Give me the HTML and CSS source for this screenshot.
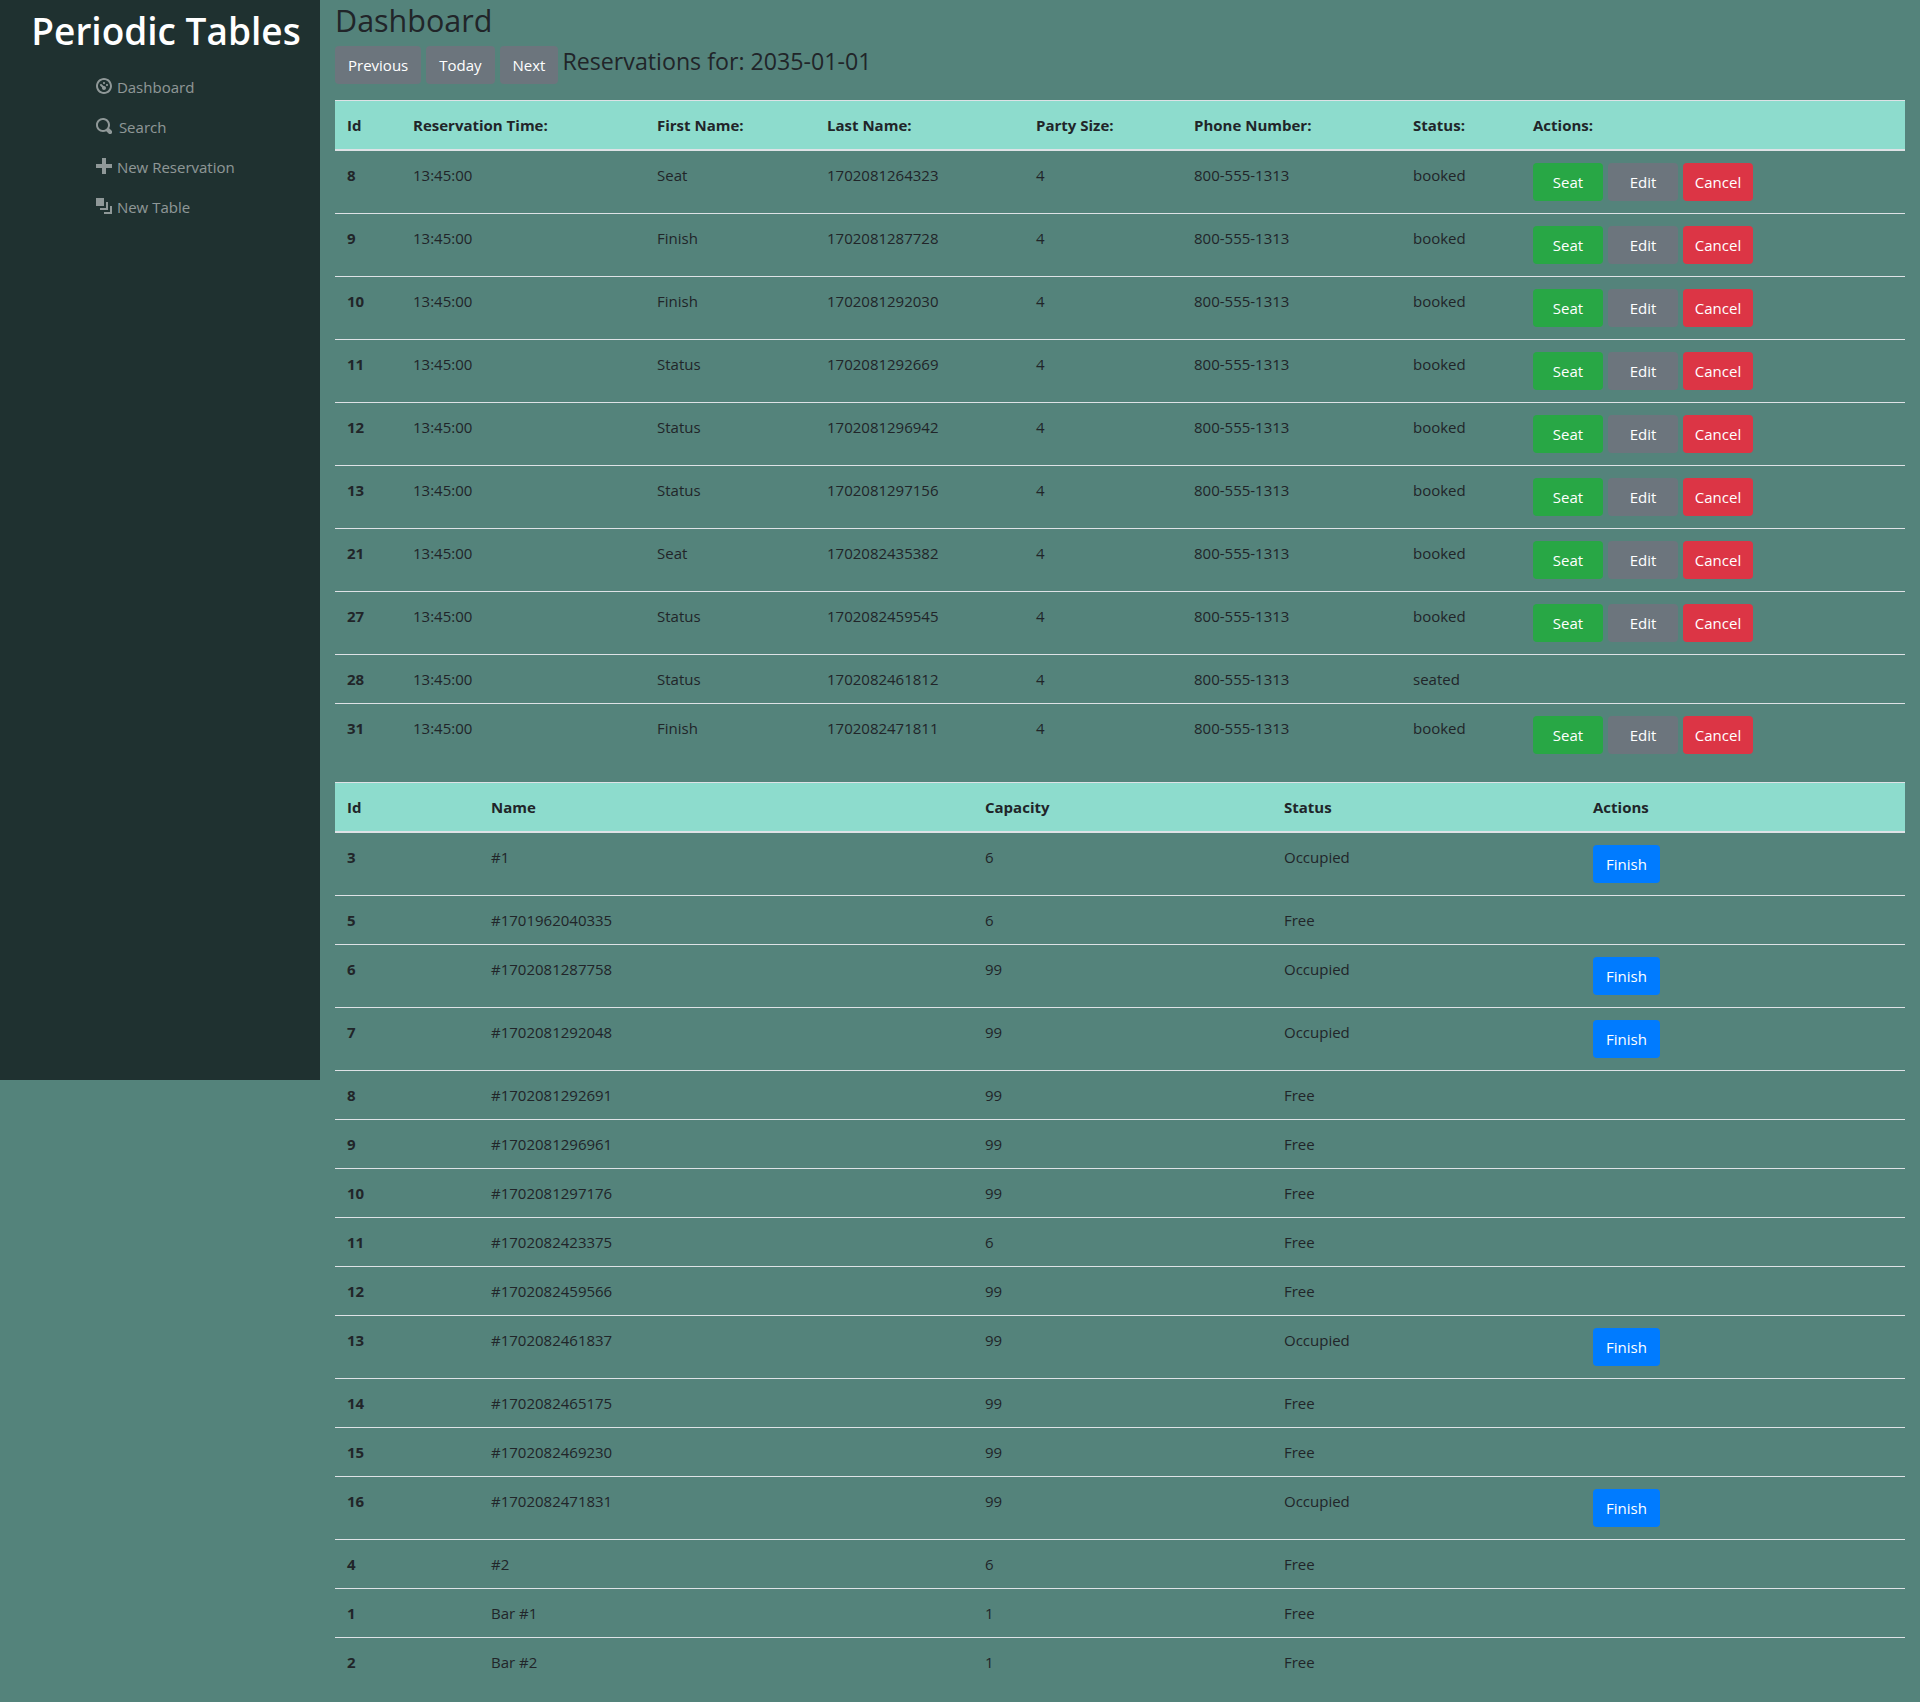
FILE: index.html
```html
<!DOCTYPE html>
<html>
  <head>
    <title>Periodic Tables</title>
    <meta name="viewport" content="width=device-width, initial-scale=1.0">
    <link rel="stylesheet" href="styles.css">
  </head>
  <body>
    <div class="layout">
      <aside class="sidebar">
        <h1 class="brand">Periodic Tables</h1>
        <ul class="nav">
          <li><a href="#"><svg class="icon" viewBox="0 0 8 8"><path d="M4 0c-2.2 0-4 1.8-4 4s1.8 4 4 4 4-1.8 4-4-1.8-4-4-4zm0 1c1.66 0 3 1.34 3 3s-1.34 3-3 3-3-1.34-3-3 1.34-3 3-3zm0 1c-.28 0-.5.22-.5.5s.22.5.5.5.5-.22.5-.5-.22-.5-.5-.5zm-1.66 1a.5.5 0 0 0-.19.84l.91.91c-.02.08-.06.16-.06.25 0 .55.45 1 1 1s1-.45 1-1-.45-1-1-1c-.09 0-.17.04-.25.06l-.91-.91a.5.5 0 0 0-.44-.16.5.5 0 0 0-.06 0zm3.16 0c-.28 0-.5.22-.5.5s.22.5.5.5.5-.22.5-.5-.22-.5-.5-.5z"/></svg> Dashboard</a></li>
          <li><a href="#"><svg class="icon icon-wide" viewBox="0 0 8 8"><path d="M3.5 0c-1.93 0-3.5 1.57-3.5 3.5s1.57 3.5 3.5 3.5c.59 0 1.17-.14 1.66-.41a1 1 0 0 0 .13.13l1 1a1.02 1.02 0 1 0 1.44-1.44l-1-1a1 1 0 0 0-.16-.13c.27-.49.44-1.06.44-1.66 0-1.93-1.57-3.5-3.5-3.5zm0 1c1.39 0 2.5 1.11 2.5 2.5 0 .66-.24 1.27-.66 1.72-.01.01-.02.02-.03.03a1 1 0 0 0-.13.13c-.44.4-1.04.63-1.69.63-1.39 0-2.5-1.11-2.5-2.5s1.11-2.5 2.5-2.5z"/></svg> Search</a></li>
          <li><a href="#"><svg class="icon" viewBox="0 0 8 8"><path d="M3 0v3h-3v2h3v3h2v-3h3v-2h-3v-3h-2z"/></svg> New Reservation</a></li>
          <li><a href="#"><svg class="icon" viewBox="0 0 8 8"><path d="M0 0v4h4v-4h-4zm5 2v3h-3v1h4v-4h-1zm2 2v3h-3v1h4v-4h-1z"/></svg> New Table</a></li>
        </ul>
      </aside>

      <main class="content">
        <h1 class="page-title">Dashboard</h1>
        <div class="date-bar">
          <button class="btn btn-secondary">Previous</button>
          <button class="btn btn-secondary">Today</button>
          <button class="btn btn-secondary">Next</button>
          <h4 class="date-title">Reservations for: 2035-01-01</h4>
        </div>

        <table class="data-table">
          <colgroup>
            <col class="r-id"><col class="r-time"><col class="r-first"><col class="r-last">
            <col class="r-party"><col class="r-phone"><col class="r-status"><col>
          </colgroup>
          <thead>
            <tr>
              <th>Id</th><th>Reservation Time:</th><th>First Name:</th><th>Last Name:</th>
              <th>Party Size:</th><th>Phone Number:</th><th>Status:</th><th>Actions:</th>
            </tr>
          </thead>
          <tbody>
            <tr>
              <th>8</th><td>13:45:00</td><td>Seat</td><td>1702081264323</td><td>4</td><td>800-555-1313</td><td>booked</td>
              <td><div class="actions"><button class="btn btn-action btn-success">Seat</button><button class="btn btn-action btn-secondary">Edit</button><button class="btn btn-action btn-danger">Cancel</button></div></td>
            </tr>
            <tr>
              <th>9</th><td>13:45:00</td><td>Finish</td><td>1702081287728</td><td>4</td><td>800-555-1313</td><td>booked</td>
              <td><div class="actions"><button class="btn btn-action btn-success">Seat</button><button class="btn btn-action btn-secondary">Edit</button><button class="btn btn-action btn-danger">Cancel</button></div></td>
            </tr>
            <tr>
              <th>10</th><td>13:45:00</td><td>Finish</td><td>1702081292030</td><td>4</td><td>800-555-1313</td><td>booked</td>
              <td><div class="actions"><button class="btn btn-action btn-success">Seat</button><button class="btn btn-action btn-secondary">Edit</button><button class="btn btn-action btn-danger">Cancel</button></div></td>
            </tr>
            <tr>
              <th>11</th><td>13:45:00</td><td>Status</td><td>1702081292669</td><td>4</td><td>800-555-1313</td><td>booked</td>
              <td><div class="actions"><button class="btn btn-action btn-success">Seat</button><button class="btn btn-action btn-secondary">Edit</button><button class="btn btn-action btn-danger">Cancel</button></div></td>
            </tr>
            <tr>
              <th>12</th><td>13:45:00</td><td>Status</td><td>1702081296942</td><td>4</td><td>800-555-1313</td><td>booked</td>
              <td><div class="actions"><button class="btn btn-action btn-success">Seat</button><button class="btn btn-action btn-secondary">Edit</button><button class="btn btn-action btn-danger">Cancel</button></div></td>
            </tr>
            <tr>
              <th>13</th><td>13:45:00</td><td>Status</td><td>1702081297156</td><td>4</td><td>800-555-1313</td><td>booked</td>
              <td><div class="actions"><button class="btn btn-action btn-success">Seat</button><button class="btn btn-action btn-secondary">Edit</button><button class="btn btn-action btn-danger">Cancel</button></div></td>
            </tr>
            <tr>
              <th>21</th><td>13:45:00</td><td>Seat</td><td>1702082435382</td><td>4</td><td>800-555-1313</td><td>booked</td>
              <td><div class="actions"><button class="btn btn-action btn-success">Seat</button><button class="btn btn-action btn-secondary">Edit</button><button class="btn btn-action btn-danger">Cancel</button></div></td>
            </tr>
            <tr>
              <th>27</th><td>13:45:00</td><td>Status</td><td>1702082459545</td><td>4</td><td>800-555-1313</td><td>booked</td>
              <td><div class="actions"><button class="btn btn-action btn-success">Seat</button><button class="btn btn-action btn-secondary">Edit</button><button class="btn btn-action btn-danger">Cancel</button></div></td>
            </tr>
            <tr>
              <th>28</th><td>13:45:00</td><td>Status</td><td>1702082461812</td><td>4</td><td>800-555-1313</td><td>seated</td><td></td>
            </tr>
            <tr>
              <th>31</th><td>13:45:00</td><td>Finish</td><td>1702082471811</td><td>4</td><td>800-555-1313</td><td>booked</td>
              <td><div class="actions"><button class="btn btn-action btn-success">Seat</button><button class="btn btn-action btn-secondary">Edit</button><button class="btn btn-action btn-danger">Cancel</button></div></td>
            </tr>
          </tbody>
        </table>

        <table class="data-table">
          <colgroup>
            <col class="t-id"><col class="t-name"><col class="t-capacity"><col class="t-status"><col>
          </colgroup>
          <thead>
            <tr><th>Id</th><th>Name</th><th>Capacity</th><th>Status</th><th>Actions</th></tr>
          </thead>
          <tbody>
            <tr><th>3</th><td>#1</td><td>6</td><td>Occupied</td><td><button class="btn btn-primary">Finish</button></td></tr>
            <tr><th>5</th><td>#1701962040335</td><td>6</td><td>Free</td><td></td></tr>
            <tr><th>6</th><td>#1702081287758</td><td>99</td><td>Occupied</td><td><button class="btn btn-primary">Finish</button></td></tr>
            <tr><th>7</th><td>#1702081292048</td><td>99</td><td>Occupied</td><td><button class="btn btn-primary">Finish</button></td></tr>
            <tr><th>8</th><td>#1702081292691</td><td>99</td><td>Free</td><td></td></tr>
            <tr><th>9</th><td>#1702081296961</td><td>99</td><td>Free</td><td></td></tr>
            <tr><th>10</th><td>#1702081297176</td><td>99</td><td>Free</td><td></td></tr>
            <tr><th>11</th><td>#1702082423375</td><td>6</td><td>Free</td><td></td></tr>
            <tr><th>12</th><td>#1702082459566</td><td>99</td><td>Free</td><td></td></tr>
            <tr><th>13</th><td>#1702082461837</td><td>99</td><td>Occupied</td><td><button class="btn btn-primary">Finish</button></td></tr>
            <tr><th>14</th><td>#1702082465175</td><td>99</td><td>Free</td><td></td></tr>
            <tr><th>15</th><td>#1702082469230</td><td>99</td><td>Free</td><td></td></tr>
            <tr><th>16</th><td>#1702082471831</td><td>99</td><td>Occupied</td><td><button class="btn btn-primary">Finish</button></td></tr>
            <tr><th>4</th><td>#2</td><td>6</td><td>Free</td><td></td></tr>
            <tr><th>1</th><td>Bar #1</td><td>1</td><td>Free</td><td></td></tr>
            <tr><th>2</th><td>Bar #2</td><td>1</td><td>Free</td><td></td></tr>
          </tbody>
        </table>
      </main>
    </div>
  </body>
</html>
```

FILE: styles.css
```css
/* CSS styles */
body {
  font-family: "Open Sans", Arial, sans-serif;
  font-size: 15px;
  line-height: 24px;
  color: #212529;
  background-color: #54837b;
  margin: 0;
}

.layout {
  display: flex;
  align-items: flex-start;
}

/* Sidebar */
.sidebar {
  width: 320px;
  height: 1080px;
  flex-shrink: 0;
  background-color: #1f3130;
}

.brand {
  margin: 0 0 12px;
  padding: 7px 0 0 12px;
  text-align: center;
  font-size: 37px;
  line-height: 48px;
  font-weight: 600;
  color: #fff;
  white-space: nowrap;
}

.nav {
  list-style: none;
  margin: 0;
  padding: 0 0 0 96px;
}

.nav a {
  display: block;
  padding: 8px 0;
  color: rgba(255, 255, 255, 0.5);
  text-decoration: none;
}

.icon {
  width: 16px;
  height: 16px;
  fill: currentColor;
  vertical-align: -1px;
  margin-right: 1px;
}

.icon-wide {
  margin-right: 3px;
}

/* Main column */
.content {
  flex: 1;
  min-width: 0;
  padding: 0 15px;
}

.page-title {
  margin: 0 0 7px;
  padding-top: 1px;
  font-size: 30.5px;
  line-height: 38px;
  font-weight: 500;
}

.date-bar {
  display: flex;
  align-items: flex-start;
  gap: 5px;
  margin-bottom: 16px;
}

.date-title {
  margin: 1px 0 0 -1px;
  font-size: 23.2px;
  line-height: 29px;
  font-weight: 500;
}

.btn {
  font-family: inherit;
  font-size: 15px;
  line-height: 24px;
  padding: 6px 12px;
  border: 1px solid transparent;
  border-radius: 4px;
  color: #fff;
  cursor: pointer;
}

.btn-action {
  width: 70px;
  padding-left: 0;
  padding-right: 0;
}

.btn-primary {
  background-color: #007bff;
}

.btn-secondary {
  background-color: #6c757d;
}

.btn-success {
  background-color: #28a745;
}

.btn-danger {
  background-color: #dc3545;
}

.actions {
  display: flex;
  gap: 5px;
}

/* Tables */
.data-table {
  width: 100%;
  table-layout: fixed;
  border-collapse: collapse;
  margin-bottom: 16px;
}

.data-table th,
.data-table td {
  padding: 12px;
  text-align: left;
  vertical-align: top;
  border-top: 1px solid #dee2e6;
}

.data-table th {
  font-weight: 700;
}

.data-table thead th {
  background-color: #8ddccd;
  border-bottom: 2px solid #dee2e6;
}

.data-table tbody tr:first-child th,
.data-table tbody tr:first-child td {
  border-top: 0;
}

.r-id { width: 66px; }
.r-time { width: 244px; }
.r-first { width: 170px; }
.r-last { width: 209px; }
.r-party { width: 158px; }
.r-phone { width: 219px; }
.r-status { width: 120px; }

.t-id { width: 144px; }
.t-name { width: 494px; }
.t-capacity { width: 299px; }
.t-status { width: 309px; }
```
